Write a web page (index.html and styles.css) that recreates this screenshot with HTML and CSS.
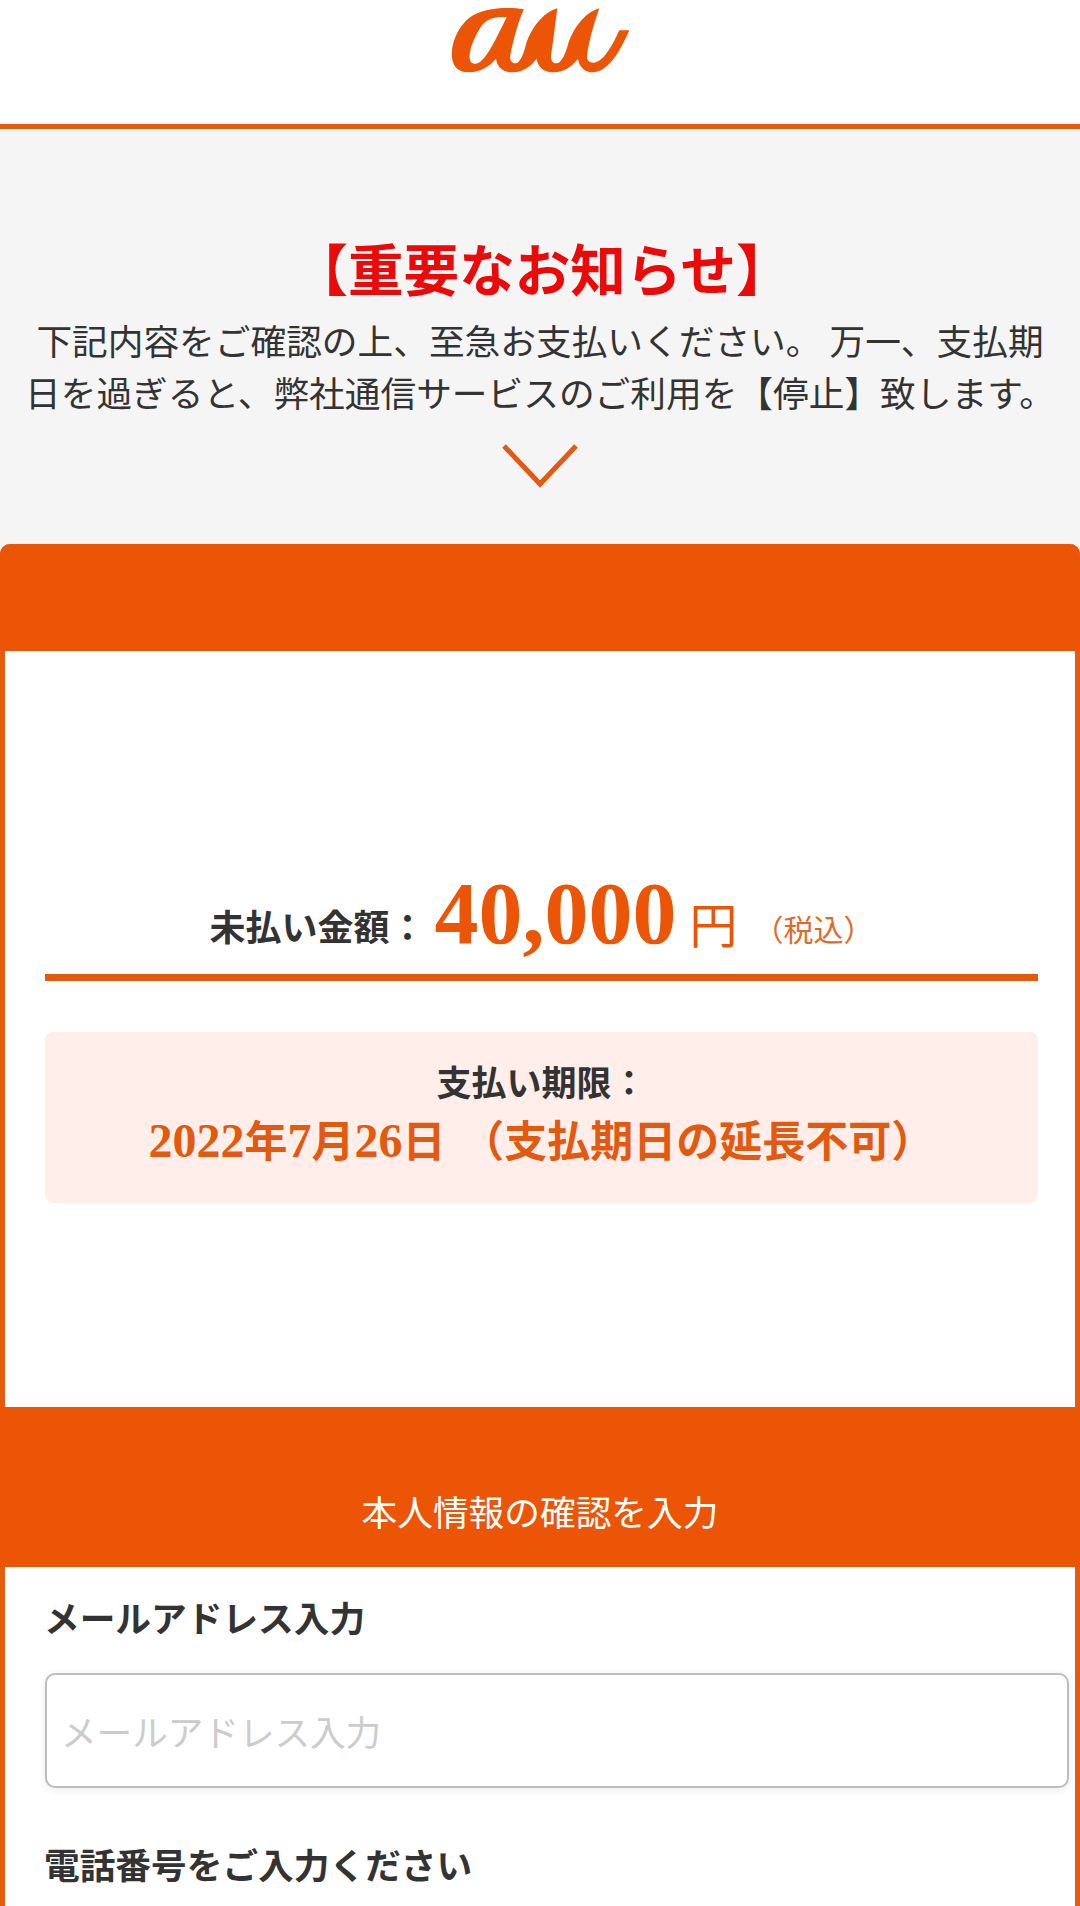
FILE: index.html
```html
<!DOCTYPE html>
<html lang="ja">
<head>
<meta charset="utf-8">
<title>au</title>
<link rel="stylesheet" href="styles.css">
</head>
<body>
<div class="page">
  <header class="site-header">
    <svg class="logo" viewBox="0 0 600 240" aria-label="au">
      <path fill-rule="evenodd" d="M252 27C200 20 128 22 88 53C50 84 32 135 36 172C39 205 60 218 88 217C120 216 148 200 168 176C172 204 193 218 220 217C248 216 272 200 290 176C294 204 316 218 342 217C372 216 396 200 414 176C418 204 438 218 460 217C508 214 542 150 568 91L538 91C520 130 492 186 462 188C446 189 438 178 442 160C448 120 462 70 478 25C434 38 398 85 382 140C375 165 362 190 350 190C336 190 330 178 334 160C340 120 346 70 352 25C308 38 272 85 256 140C250 165 238 190 227 190C213 190 208 178 212 160C220 120 236 60 252 27ZM200 52C168 47 135 57 120 85C100 118 84 158 90 180C94 194 108 194 120 186C146 166 170 112 200 52Z"/>
    </svg>
  </header>

  <section class="notice">
    <h1 class="notice-title">【重要なお知らせ】</h1>
    <p class="notice-text">下記内容をご確認の上、至急お支払いください。 万一、支払期<br>日を過ぎると、弊社通信サービスのご利用を【停止】致します。</p>
    <svg class="chevron" viewBox="0 0 76 44" aria-hidden="true"><path d="M2 2L38 40L74 2"/></svg>
  </section>

  <main class="card">
    <div class="card-head"></div>
    <div class="billing">
      <div class="amount">
        <span class="amount-label">未払い金額：</span><span class="amount-value">40,000</span><span class="amount-unit">円</span><span class="amount-tax">（税込）</span>
      </div>
      <div class="deadline">
        <div class="deadline-label">支払い期限：</div>
        <div class="deadline-date"><span class="num">2022</span>年<span class="num">7</span>月<span class="num">26</span>日 （支払期日の延長不可）</div>
      </div>
    </div>
    <h2 class="form-band">本人情報の確認を入力</h2>
    <form class="form">
      <label class="field-label" for="email">メールアドレス入力</label>
      <input class="field-input" id="email" type="text" placeholder="メールアドレス入力">
      <label class="field-label field-label-next" for="tel">電話番号をご入力ください</label>
    </form>
  </main>
</div>
</body>
</html>
```
FILE: styles.css
```css
* { box-sizing: border-box; }
html, body { margin: 0; padding: 0; }
body {
  font-family: "Noto Sans CJK JP", "Noto Sans", sans-serif;
  color: #333;
  background: #f5f5f5;
}
.page {
  height: 1906px;
  overflow: hidden;
  display: flex;
  flex-direction: column;
}

.site-header {
  flex: none;
  height: 129px;
  background: #fff;
  border-bottom: 5px solid #e85a0f;
  display: flex;
  justify-content: center;
  align-items: flex-start;
}
.logo { width: 200px; height: 80px; fill: #eb5505; }

.notice {
  flex: none;
  background: #f5f5f5;
  height: 415px;
  padding-top: 108px;
  text-align: center;
}
.notice-title {
  margin: 0;
  padding-left: 4px;
  font-size: 55.6px;
  line-height: 60px;
  font-weight: 700;
  color: #ea0a0a;
}
.notice-text {
  margin: 17px 0 0;
  font-size: 35.7px;
  line-height: 52px;
  white-space: nowrap;
}
.chevron {
  display: block;
  width: 76px;
  height: 44px;
  margin: 26px auto 0;
  fill: none;
  stroke: #e2590f;
  stroke-width: 5;
}

.card {
  flex: 1;
  border-left: 5px solid #e85a0f;
  border-right: 5px solid #e85a0f;
  border-radius: 10px 10px 0 0;
  background: #fff;
}
.card-head {
  height: 107px;
  margin: 0 -5px;
  background: #eb5505;
  border-radius: 10px 10px 0 0;
}
.billing {
  height: 756px;
  padding: 220px 37px 0 40px;
}
.amount {
  height: 110px;
  border-bottom: 7px solid #e2590f;
  text-align: center;
  line-height: 85px;
  white-space: nowrap;
  color: #eb5505;
}
.amount-label { font-size: 36px; font-weight: 700; color: #333; vertical-align: 2px; }
.amount-value {
  margin-left: 9px;
  font-family: "Liberation Serif", serif;
  font-size: 88px;
  font-weight: 700;
}
.amount-unit { margin-left: 13px; font-size: 48px; }
.amount-tax { margin-left: 16px; font-size: 30px; color: #e2692a; vertical-align: 2px; }

.deadline {
  height: 171px;
  margin-top: 51px;
  padding-top: 24px;
  background: #ffeee9;
  border-radius: 8px;
  text-align: center;
}
.deadline-label { font-size: 35px; line-height: 50px; font-weight: 700; }
.deadline-date {
  font-size: 43px;
  line-height: 64px;
  font-weight: 700;
  color: #e2590f;
  white-space: nowrap;
  word-spacing: 6px;
}
.num { font-family: "Liberation Serif", serif; font-size: 48px; }

.form-band {
  height: 160px;
  margin: 0 -5px;
  padding-bottom: 30px;
  display: flex;
  align-items: flex-end;
  justify-content: center;
  background: #eb5505;
  color: #fff;
  font-size: 35.7px;
  line-height: 52px;
  font-weight: 400;
}

.form { padding: 24px 6px 0 40px; }
.field-label {
  display: block;
  margin-left: -1px;
  font-size: 35.7px;
  line-height: 52px;
  font-weight: 700;
}
.field-label-next { margin-top: 50px; }
.field-input {
  display: block;
  width: 100%;
  height: 115px;
  margin-top: 30px;
  padding: 0 14px;
  border: 2px solid #bdbdbd;
  border-radius: 10px;
  background: #fff;
  box-shadow: 0 2px 8px rgba(0,0,0,.08);
  font-family: inherit;
  font-size: 35.6px;
  color: #333;
}
.field-input::placeholder { color: #ccc; opacity: 1; }
```
